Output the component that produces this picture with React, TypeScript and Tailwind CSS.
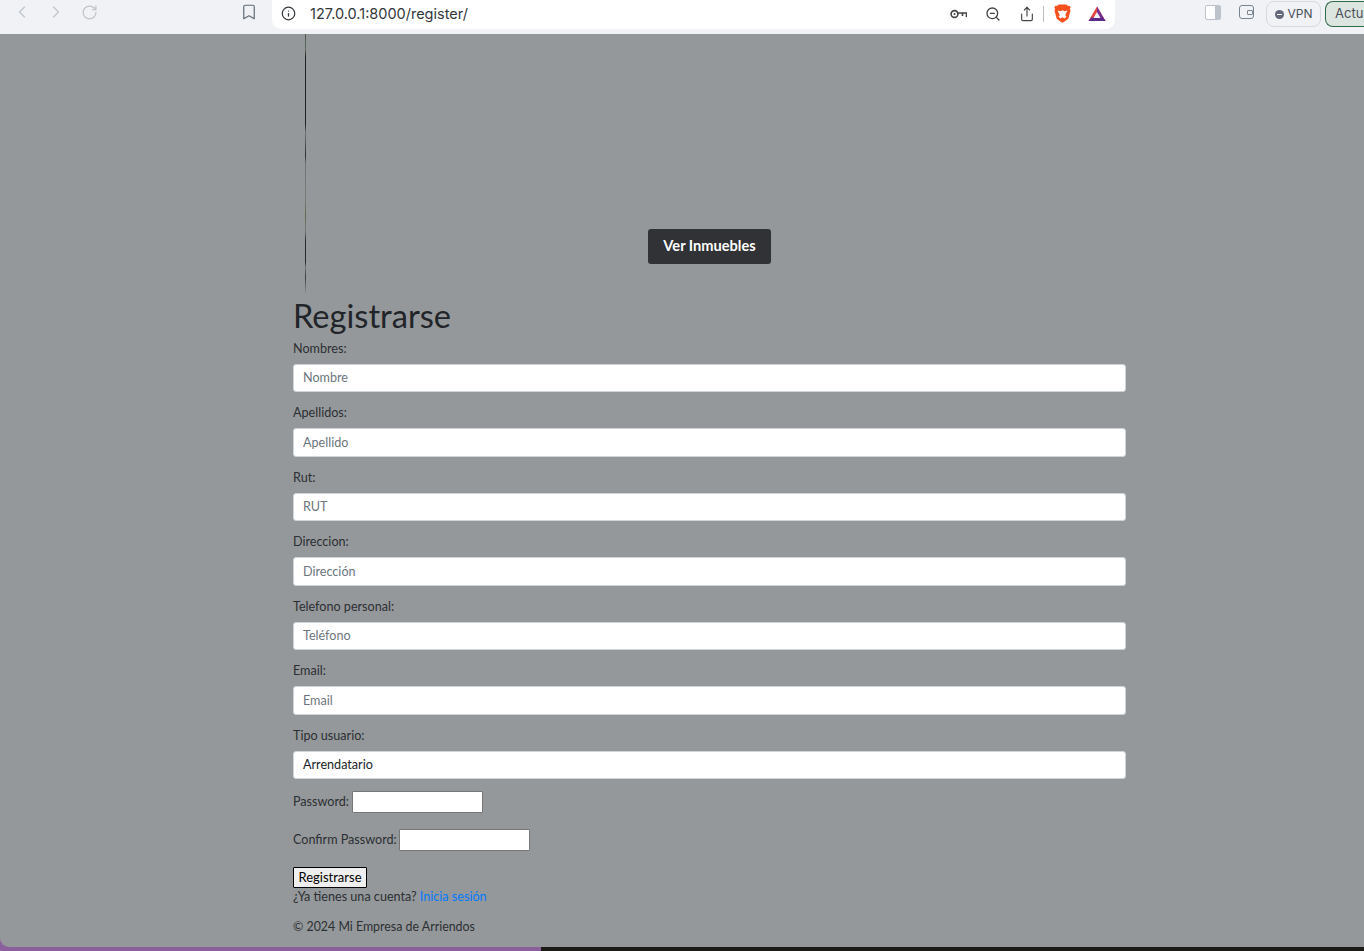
import { ChevronLeft, ChevronRight, RotateCw, Bookmark, Info, ZoomOut, Share } from "lucide-react";

const campos = [
  { label: "Nombres:", placeholder: "Nombre" },
  { label: "Apellidos:", placeholder: "Apellido" },
  { label: "Rut:", placeholder: "RUT" },
  { label: "Direccion:", placeholder: "Dirección" },
  { label: "Telefono personal:", placeholder: "Teléfono" },
  { label: "Email:", placeholder: "Email" },
];

function BraveIcon() {
  return (
    <svg width="17" height="20" viewBox="0 0 17 20">
      <path d="M4.500 .5h8l1.500 1.600 1.600-.3 1 1.400-.6 1.700.5 1.800-2.200 8-4 3-1.800 1-1.800-1-4-3-2.200-8 .5-1.800-.6-1.700 1-1.400 1.600.3z" fill="#f4511e" />
      <path d="M3.500 6.500l3 .8 2-1 2 1 3-.8-1.600 3-.6 2 1.200 1.200-2 1.800-2-1.200-2 1.200-2-1.800 1.200-1.200-.6-2z" fill="#fff" />
      <path d="M7 14.300h3L8.500 16z" fill="#f4511e" />
    </svg>
  );
}

function BatIcon() {
  return (
    <svg width="18" height="16" viewBox="0 0 18 16">
      <path d="M9 .5L17.500 15H.5z" fill="#e8473f" />
      <path d="M9 .5L17.500 15H11L9 8z" fill="#7b2c8f" />
      <path d="M.5 15h17l-2.500-3.500H3z" fill="#5a2a86" />
      <path d="M9 6l3.500 6h-7z" fill="#f0f2f6" />
    </svg>
  );
}

function KeyIcon() {
  return (
    <svg width="17" height="10" viewBox="0 0 17 10" fill="none" stroke="#444" strokeWidth="1.6">
      <circle cx="4.500" cy="5" r="3.400" />
      <circle cx="4.500" cy="5" r="1" fill="#444" stroke="none" />
      <path d="M8 4h8.500v4M12.500 4v3" />
    </svg>
  );
}

function Toolbar() {
  return (
    <header className="flex h-[34px] items-start bg-[#f0f2f6] text-[#4a5058]">
      <div className="flex w-[272px] items-center pt-[2px]">
        <ChevronLeft className="ml-[12px] text-[#c0c6cc]" size={20} strokeWidth={1.5} />
        <ChevronRight className="ml-[14px] text-[#c0c6cc]" size={20} strokeWidth={1.5} />
        <RotateCw className="ml-[15px] text-[#c0c6cc]" size={17} strokeWidth={1.8} />
        <Bookmark className="ml-[142px] text-[#5f6b76]" size={18} strokeWidth={1.6} />
      </div>
      <div className="flex h-[29px] w-[843px] items-center rounded-b-[9px] bg-white pb-[2px] pl-[9px] pr-[9px]">
        <Info className="text-[#33373c]" size={15} strokeWidth={2} />
        <span className="ml-[14px] font-['Inter',sans-serif] text-[14.5px] text-[#33373c]">127.0.0.1:8000/register/</span>
        <span className="ml-auto flex"><KeyIcon /></span>
        <ZoomOut className="ml-[18px] text-[#444]" size={16} strokeWidth={2} />
        <Share className="ml-[18px] text-[#444]" size={16} strokeWidth={1.7} />
        <span className="ml-[8px] h-[16px] w-px bg-[#b9bdc2]" />
        <span className="ml-[10px] flex"><BraveIcon /></span>
        <span className="ml-[17px] flex"><BatIcon /></span>
      </div>
      <div className="flex flex-1 items-start pt-[1px]">
        <span className="ml-[90px] mt-[4px] flex h-[15px] w-[16px] justify-end rounded-[2px] border border-[#bcc3ca] bg-white">
          <span className="h-full w-[5px] bg-[#bcc3ca]" />
        </span>
        <span className="ml-[18px] mt-[4px] flex h-[14px] w-[15px] items-center justify-end rounded-[3px] border-[1.5px] border-[#78838d]">
          <span className="h-[5px] w-[6px] rounded-[1px] border border-[#78838d] bg-[#f0f2f6]" />
        </span>
        <span className="ml-[12px] flex h-[26px] w-[55px] items-center justify-center gap-[4px] rounded-[8px] border border-[#d3d9de] font-['Inter',sans-serif] text-[12px]">
          <span className="flex h-[9px] w-[9px] items-center justify-center rounded-full bg-[#63697a]">
            <span className="h-px w-[5px] bg-white" />
          </span>
          VPN
        </span>
        <span className="ml-[4px] flex h-[26px] flex-1 items-center overflow-hidden rounded-l-[8px] border border-r-0 border-[#2f6b45] bg-[#dde5e0] pl-[9px] font-['Inter',sans-serif] text-[13px]">
          Actu
        </span>
      </div>
    </header>
  );
}

function Campo({ label, placeholder }: { label: string; placeholder: string }) {
  return (
    <div className="mb-[12px]">
      <label className="mb-[6px] block h-[18px] leading-[18px]">{label}</label>
      <input
        readOnly
        placeholder={placeholder}
        className="block h-[28.5px] w-full rounded-[3px] border border-[#ced4da] bg-white px-[9px] text-[12.6px] placeholder:text-[#6c757d]"
      />
    </div>
  );
}

export default function App() {
  return (
    <div className="flex h-[951px] flex-col overflow-hidden bg-[#8a5f9c] font-['Lato',sans-serif]">
      <Toolbar />
      <main className="h-[913px] rounded-bl-[9px] bg-[#95989a]">
        <div className="ml-[293px] w-[833px] text-[12.6px] leading-[18px] text-[#2b2f33]">
          {/* imagen rota del banner: solo se ve una linea de 1px */}
          <section className="grid h-[259px]">
            <div className="ml-[12px] w-px bg-[linear-gradient(to_bottom,#4a5a48_0%,#5d6b5a_6%,#1c2328_9%,#1c2328_35%,#70757a_38%,#2a2d30_47%,#6f7471_50%,#7a7d78_64%,#5d6b4a_70%,#767a7c_76%,#25292e_80%,#25292e_88%,#70757a_90%,#3a3d3e_94%,#8a8d8e_100%)] [grid-area:1/1]" />
            <div className="flex items-end justify-center pb-[29px] [grid-area:1/1]">
              <a className="flex h-[35px] w-[123px] items-center justify-center rounded-[3px] bg-[#303235] pb-[1px] text-[14.6px] font-bold text-white">
                Ver Inmuebles
              </a>
            </div>
          </section>
          <h1 className="mb-[6px] mt-[4.5px] h-[36px] text-[32.6px] font-normal leading-[35px] text-[#212529]">Registrarse</h1>
          <form>
            {campos.map((c) => (
              <Campo key={c.label} label={c.label} placeholder={c.placeholder} />
            ))}
            <div className="mb-[12px]">
              <label className="mb-[6px] block h-[18px] leading-[18px]">Tipo usuario:</label>
              <div className="flex h-[28.5px] items-center rounded-[3px] border border-[#ced4da] bg-white px-[9px] text-[12.6px] text-[#212529]">
                Arrendatario
              </div>
            </div>
            <p className="mb-[16.500px] flex items-center">
              <label>Password:</label>
              <input readOnly type="password" className="ml-[3px] h-[21.5px] w-[131px] rounded-[1px] border border-[#767676] bg-white" />
            </p>
            <p className="mb-[16.500px] flex items-center">
              <label>Confirm Password:</label>
              <input readOnly type="password" className="ml-[2px] h-[21.5px] w-[131px] rounded-[1px] border border-[#767676] bg-white" />
            </p>
            <button type="button" className="block h-[21px] w-[74px] rounded-[1px] border border-black bg-[#efefef] text-[13px] leading-none text-black">
              Registrarse
            </button>
          </form>
          <p className="mt-0">
            ¿Ya tienes una cuenta? <a className="text-[#007bff]">Inicia sesión</a>
          </p>
          <footer className="mt-[12px] text-[12.4px]">© 2024 Mi Empresa de Arriendos</footer>
        </div>
      </main>
      <div className="flex-1 bg-[#8a5f9c]">
        <div className="ml-[541px] h-full bg-[#1c1a17]" />
      </div>
    </div>
  );
}
